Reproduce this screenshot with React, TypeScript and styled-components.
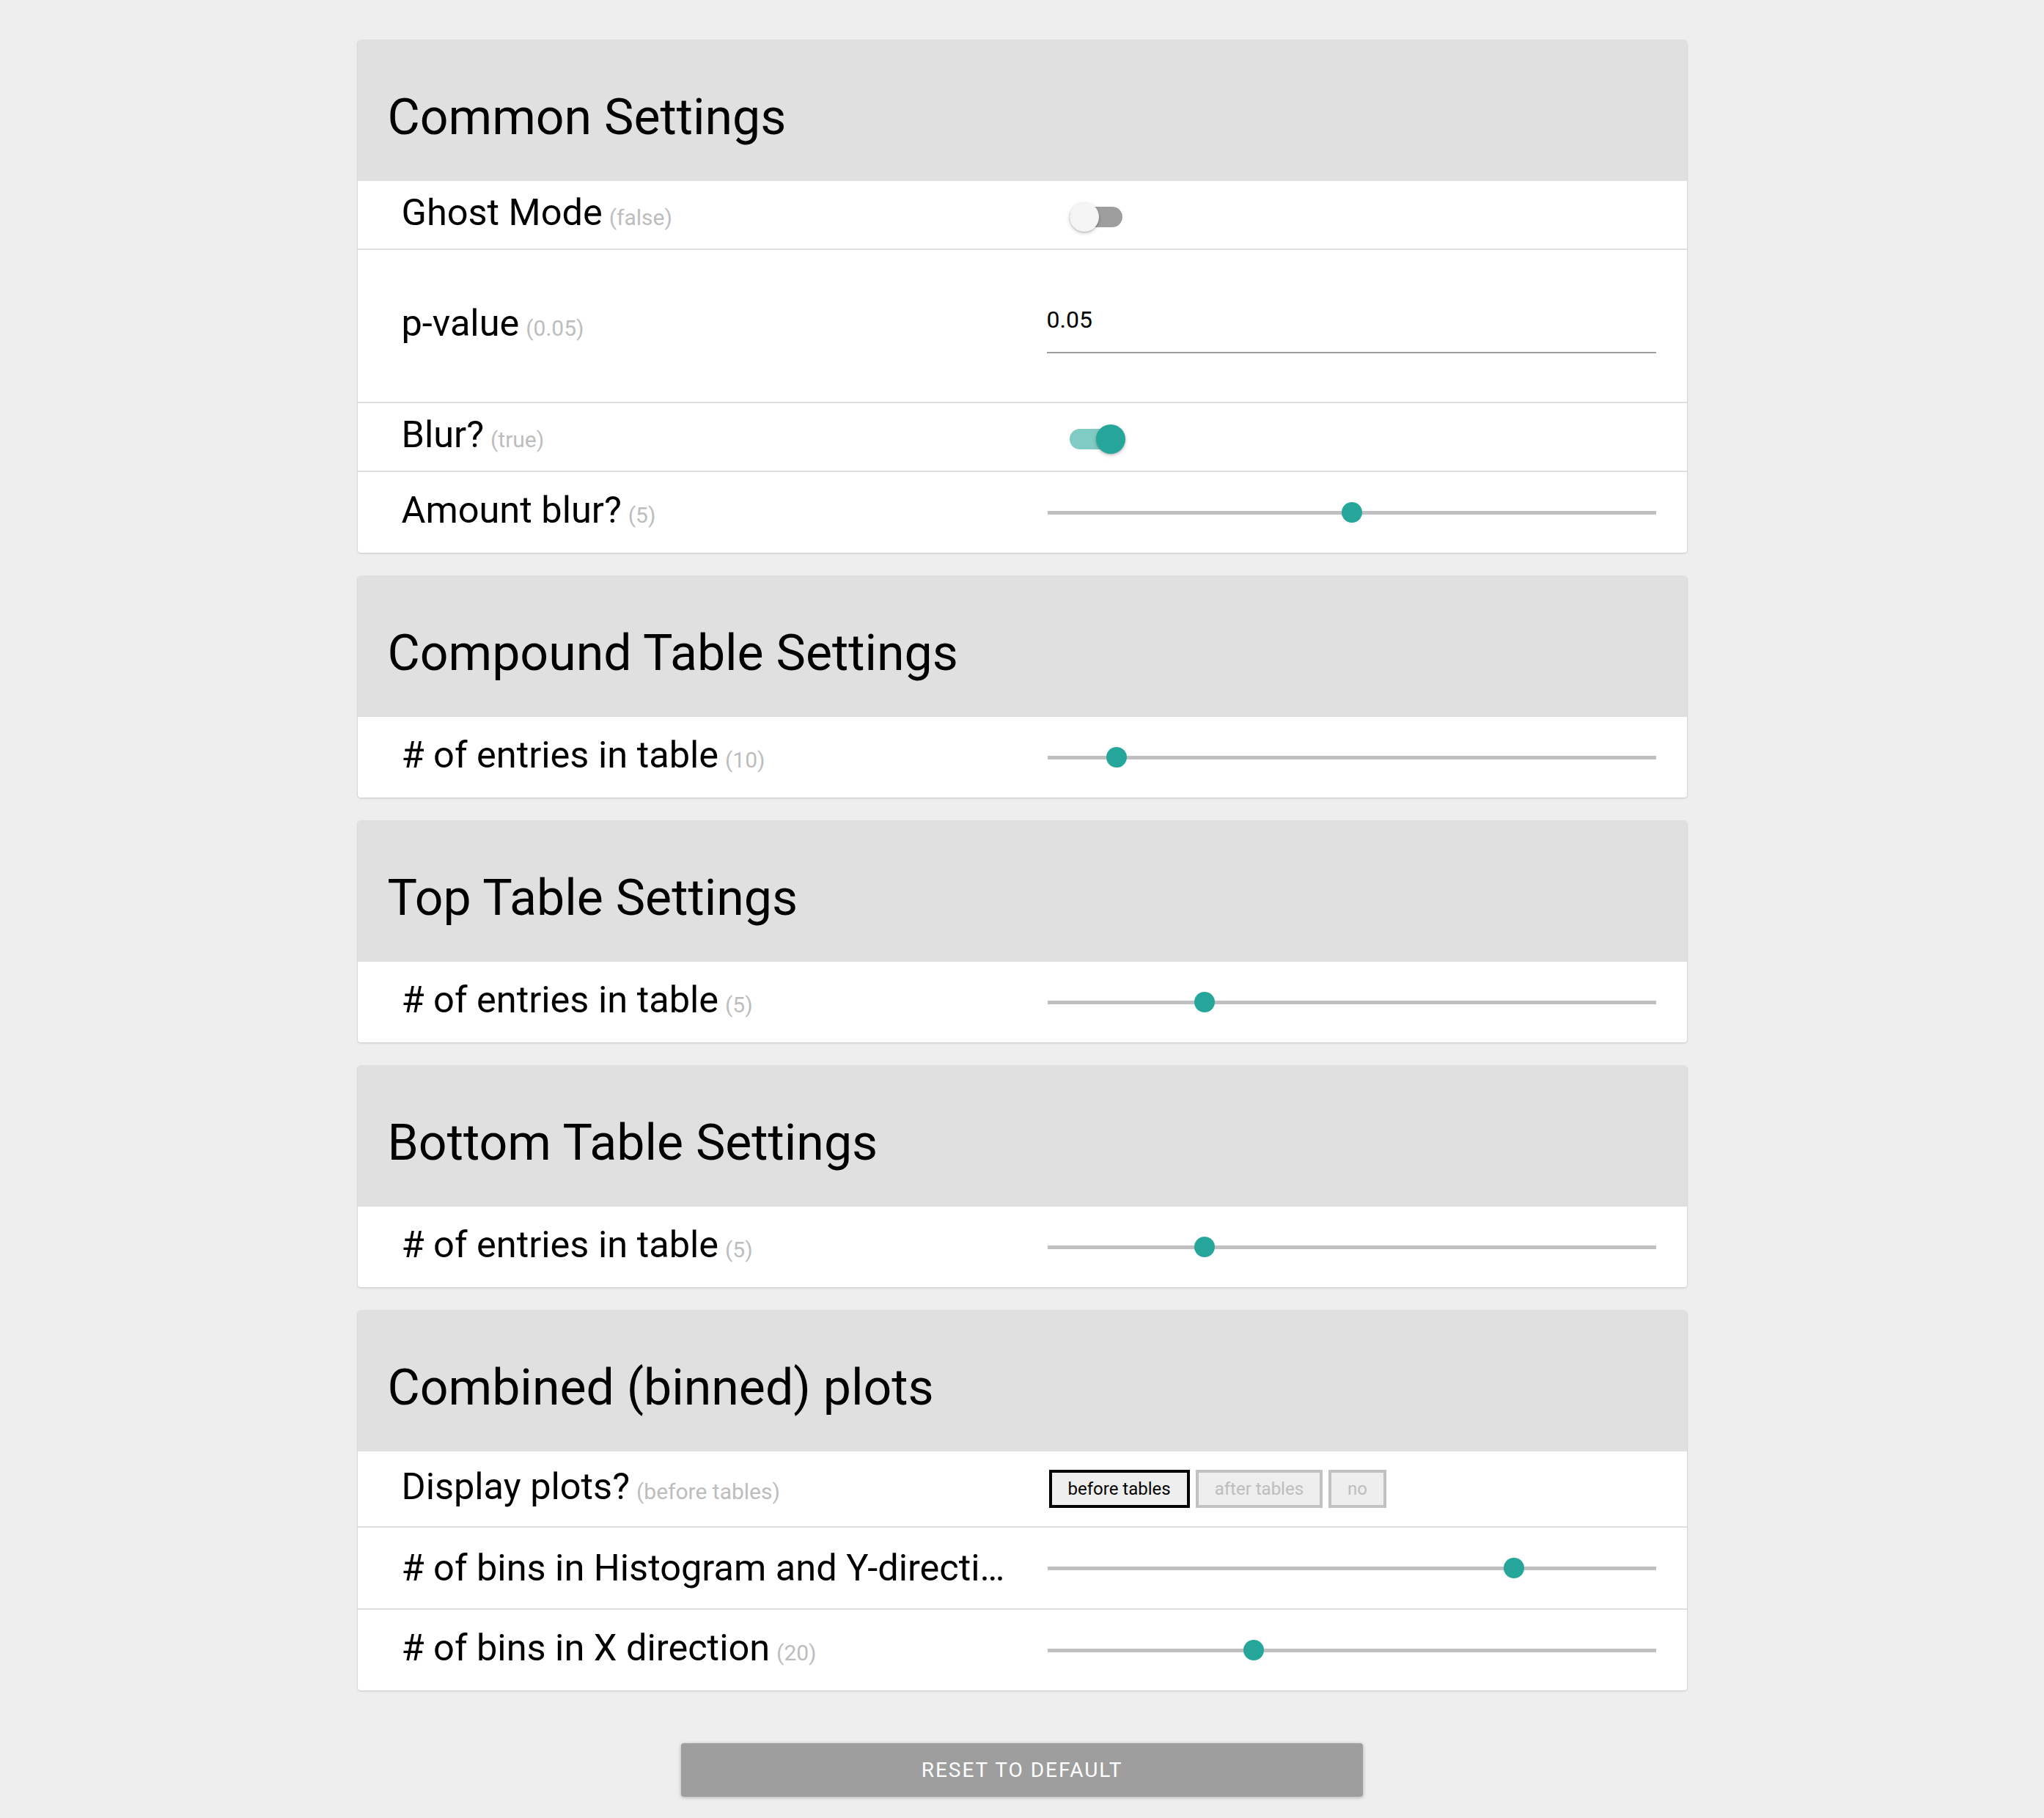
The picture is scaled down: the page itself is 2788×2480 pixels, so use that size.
import React from 'react';
import styled, { createGlobalStyle } from 'styled-components';

const GlobalStyle = createGlobalStyle`
  html, body {
    margin: 0;
    padding: 0;
    background: #eeeeee;
  }
  body {
    font-family: Roboto, "Noto Sans", "Liberation Sans", Arial, sans-serif;
    color: #000;
  }
  * { box-sizing: border-box; }
`;

const Page = styled.main`
  width: 1813px;
  margin: 0 auto;
  padding: 55px 0 27px;
  display: flex;
  flex-direction: column;
  gap: 32px;
`;

const Card = styled.section`
  background: #ffffff;
  border-radius: 4px;
  overflow: hidden;
  box-shadow: 0 0 0 1px rgba(0, 0, 0, 0.04), 0 1px 3px rgba(0, 0, 0, 0.14);
`;

const CardHeader = styled.h2`
  margin: 0;
  height: 192px;
  padding: 65px 0 0 41px;
  background: #e0e0e0;
  font-family: Roboto, "Noto Sans", sans-serif;
  font-weight: 400;
  font-size: 68px;
  line-height: 80px;
  color: #000;
`;

const Row = styled.div<{ $h: number }>`
  display: grid;
  grid-template-columns: 834px 1fr;
  column-gap: 46px;
  align-items: center;
  height: ${(p) => p.$h}px;
  padding: 0 42px 0 60px;
  box-sizing: content-box;
  & + & {
    border-top: 2px solid #e0e0e0;
  }
`;

const Label = styled.div`
  font-size: 50.5px;
  line-height: 58px;
  color: #000;
  white-space: nowrap;
  overflow: hidden;
  text-overflow: ellipsis;
`;

const Hint = styled.span`
  font-size: 30px;
  color: #bdbdbd;
  margin-left: 9px;
`;

const Toggle = styled.div<{ $on: boolean }>`
  position: relative;
  width: 76px;
  height: 40px;
  margin: 6px 0 0 31px;
`;

const ToggleTrack = styled.div<{ $on: boolean }>`
  position: absolute;
  left: 0;
  top: 6px;
  width: 72px;
  height: 28px;
  border-radius: 14px;
  background: ${(p) => (p.$on ? '#80cbc4' : '#9e9e9e')};
`;

const ToggleThumb = styled.div<{ $on: boolean }>`
  position: absolute;
  top: 0;
  left: ${(p) => (p.$on ? '36px' : '0')};
  width: 40px;
  height: 40px;
  border-radius: 50%;
  background: ${(p) => (p.$on ? '#26a69a' : '#f5f5f5')};
  box-shadow: 0 2px 5px rgba(0, 0, 0, 0.22), 0 1px 2px rgba(0, 0, 0, 0.12);
`;

const TextField = styled.div`
  margin-top: 5px;
  padding-bottom: 20px;
  border-bottom: 2px solid #9e9e9e;
`;

const FieldValue = styled.div`
  font-size: 32px;
  line-height: 48px;
  color: #000;
`;

const SliderTrack = styled.div`
  position: relative;
  height: 5px;
  margin-left: 1px;
  background: #bfbfc1;
`;

const SliderThumb = styled.div`
  position: absolute;
  top: 50%;
  width: 28px;
  height: 28px;
  border-radius: 50%;
  background: #26a69a;
  transform: translate(-50%, -50%);
`;

const ChoiceGroup = styled.div`
  display: flex;
  gap: 8px;
  margin-left: 3px;
`;

const Choice = styled.button<{ $active: boolean }>`
  height: 52px;
  padding: 0 22px;
  margin: 0;
  border: 4px solid ${(p) => (p.$active ? '#000000' : '#c2c2c2')};
  background: #eeeeee;
  color: ${(p) => (p.$active ? '#000000' : '#bdbdbd')};
  font-family: Roboto, "Noto Sans", sans-serif;
  font-size: 24px;
  line-height: 1;
  cursor: pointer;
`;

const ResetButton = styled.button`
  align-self: center;
  width: 930px;
  height: 73px;
  margin-top: 40px;
  border: 0;
  border-radius: 4px;
  background: #9e9e9e;
  color: #ffffff;
  font-family: Roboto, "Noto Sans", sans-serif;
  font-size: 28px;
  letter-spacing: 2px;
  text-transform: uppercase;
  box-shadow: 0 1px 6px rgba(0, 0, 0, 0.12), 0 1px 4px rgba(0, 0, 0, 0.16);
  cursor: pointer;
`;

type Setting =
  | { kind: 'toggle'; label: string; hint: string; on: boolean }
  | { kind: 'text'; label: string; hint: string; value: string }
  | { kind: 'slider'; label: string; hint?: string; frac: number }
  | { kind: 'choice'; label: string; hint: string; options: string[]; selected: number };

const sections: { title: string; settings: Setting[] }[] = [
  {
    title: 'Common Settings',
    settings: [
      { kind: 'toggle', label: 'Ghost Mode', hint: '(false)', on: false },
      { kind: 'text', label: 'p-value', hint: '(0.05)', value: '0.05' },
      { kind: 'toggle', label: 'Blur?', hint: '(true)', on: true },
      { kind: 'slider', label: 'Amount blur?', hint: '(5)', frac: 0.5 },
    ],
  },
  {
    title: 'Compound Table Settings',
    settings: [{ kind: 'slider', label: '# of entries in table', hint: '(10)', frac: 0.1134 }],
  },
  {
    title: 'Top Table Settings',
    settings: [{ kind: 'slider', label: '# of entries in table', hint: '(5)', frac: 0.259 }],
  },
  {
    title: 'Bottom Table Settings',
    settings: [{ kind: 'slider', label: '# of entries in table', hint: '(5)', frac: 0.259 }],
  },
  {
    title: 'Combined (binned) plots',
    settings: [
      {
        kind: 'choice',
        label: 'Display plots?',
        hint: '(before tables)',
        options: ['before tables', 'after tables', 'no'],
        selected: 0,
      },
      { kind: 'slider', label: '# of bins in Histogram and Y-direction', frac: 0.767 },
      { kind: 'slider', label: '# of bins in X direction', hint: '(20)', frac: 0.339 },
    ],
  },
];

const rowHeight = (s: Setting) => {
  switch (s.kind) {
    case 'toggle':
      return 92;
    case 'text':
      return 207;
    case 'choice':
      return 102;
    default:
      return 110;
  }
};

function Control({ s }: { s: Setting }) {
  if (s.kind === 'toggle') {
    return (
      <Toggle $on={s.on}>
        <ToggleTrack $on={s.on} />
        <ToggleThumb $on={s.on} />
      </Toggle>
    );
  }
  if (s.kind === 'text') {
    return (
      <TextField>
        <FieldValue>{s.value}</FieldValue>
      </TextField>
    );
  }
  if (s.kind === 'choice') {
    return (
      <ChoiceGroup>
        {s.options.map((o, i) => (
          <Choice key={o} $active={i === s.selected}>
            {o}
          </Choice>
        ))}
      </ChoiceGroup>
    );
  }
  return (
    <SliderTrack>
      <SliderThumb style={{ left: `${s.frac * 100}%` }} />
    </SliderTrack>
  );
}

export default function App() {
  return (
    <>
      <GlobalStyle />
      <Page>
        {sections.map((sec) => (
          <Card key={sec.title}>
            <CardHeader>{sec.title}</CardHeader>
            {sec.settings.map((s, i) => (
              <Row key={i} $h={rowHeight(s)}>
                <Label>
                  {s.label}
                  {s.hint ? <Hint>{s.hint}</Hint> : null}
                </Label>
                <Control s={s} />
              </Row>
            ))}
          </Card>
        ))}
        <ResetButton>Reset to default</ResetButton>
      </Page>
    </>
  );
}
